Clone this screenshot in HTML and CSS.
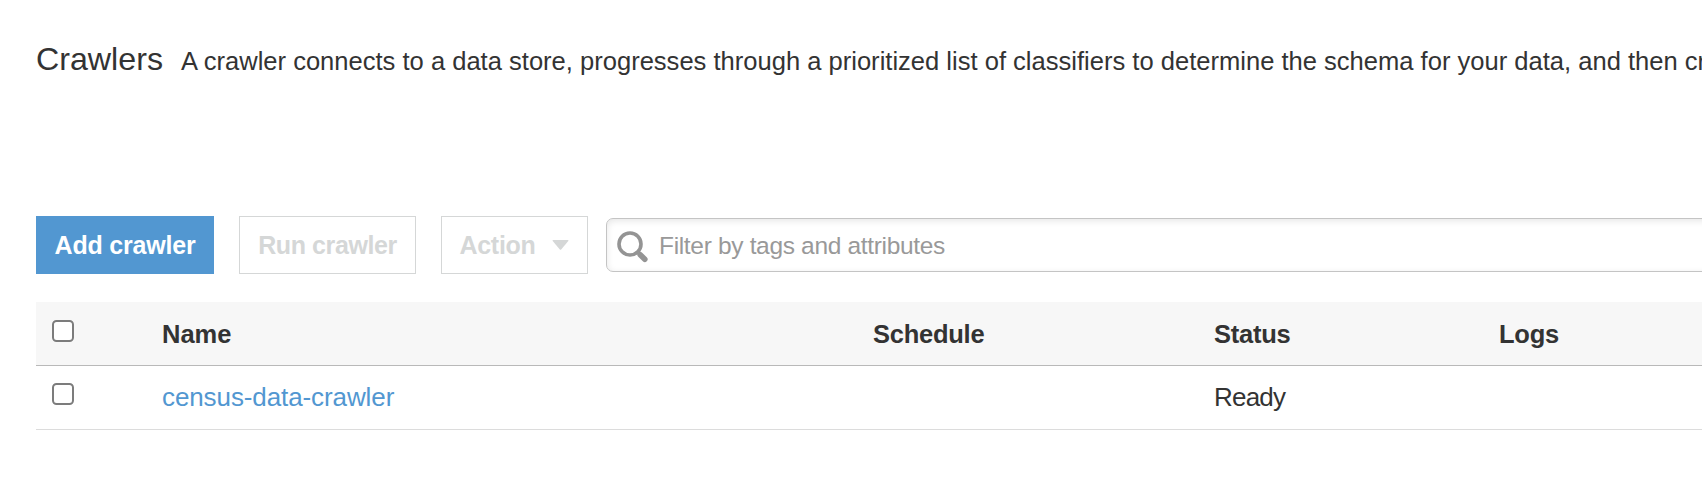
FILE: index.html
```html
<!DOCTYPE html>
<html lang="en">
<head>
<meta charset="utf-8">
<title>Crawlers</title>
<link rel="stylesheet" href="styles.css">
</head>
<body>
<main class="page">
  <header class="intro">
    <h1 class="title">Crawlers</h1>
    <p class="description">A crawler connects to a data store, progresses through a prioritized list of classifiers to determine the schema for your data, and then cr</p>
  </header>
  <div class="toolbar">
    <button class="button primary">Add crawler</button>
    <button class="button run" disabled>Run crawler</button>
    <button class="button action" disabled><span>Action</span><svg class="caret" width="17" height="10" viewBox="0 0 17 10"><path d="M1.2 0h14.6q1.2 0 .5 1L9.4 9.3q-.9 1-1.8 0L.7 1Q0 0 1.2 0z" fill="currentColor"/></svg></button>
    <div class="search">
      <svg class="search-icon" width="31" height="32" viewBox="0 0 31 32" fill="none" stroke="#949494"><circle cx="13" cy="13" r="11" stroke-width="3.6"/><path d="M20.5 20.7l2.2 2.2" stroke-width="4"/><path d="M23.2 23.7l4.6 4.5" stroke-width="5.6" stroke-linecap="round"/></svg>
      <input class="filter" type="text" placeholder="Filter by tags and attributes">
    </div>
  </div>
  <div class="table">
    <div class="row head">
      <input class="check" type="checkbox"><span class="name">Name</span><span class="schedule">Schedule</span><span class="status">Status</span><span class="logs">Logs</span>
    </div>
    <div class="row body">
      <input class="check" type="checkbox"><span class="name"><a class="link">census-data-crawler</a></span><span></span><span class="ready">Ready</span><span></span>
    </div>
  </div>
</main>
</body>
</html>
```
FILE: styles.css
```css
* { box-sizing: border-box; }
body {
  margin: 0;
  background: #fff;
  color: #333;
  font: 26px/32px "Liberation Sans", Arial, sans-serif;
  overflow: hidden;
}
.page { padding: 40px 0 0 36px; }
.intro {
  display: flex;
  align-items: baseline;
  gap: 18px;
  height: 176px;
  white-space: nowrap;
}
.title { margin: 0; font-size: 32.2px; line-height: 38px; font-weight: 400; }
.description { margin: 0; font-size: 25.55px; }
.toolbar { display: flex; align-items: center; height: 58px; }
.button {
  flex: none;
  display: flex;
  align-items: center;
  justify-content: center;
  height: 58px;
  margin: 0 25px 0 0;
  padding: 0;
  border: 1px solid #d5d7d7;
  background: #fff;
  color: #d5d7d7;
  font: bold 25px/32px "Liberation Sans", Arial, sans-serif;
  letter-spacing: -.2px;
}
.primary { width: 178px; border-color: #5297d1; background: #5297d1; color: #fff; }
.run { width: 177px; letter-spacing: -.4px; }
.action { width: 147px; gap: 17px; margin-right: 18px; letter-spacing: -.3px; }
.search {
  flex: 1;
  display: flex;
  align-items: center;
  height: 54px;
  margin-right: -20px;
  padding-left: 10px;
  border: 1px solid #c4c4c4;
  border-radius: 7px;
  box-shadow: inset 0 2px 7px rgba(0, 0, 0, .1);
}
.search-icon { flex: none; margin: 3px 11px 0 0; }
.filter {
  flex: 1;
  padding: 1px 0 0;
  border: 0;
  outline: 0;
  background: transparent;
  font: 24.5px/32px "Liberation Sans", Arial, sans-serif;
  letter-spacing: -.33px;
}
.filter::placeholder { color: #999; opacity: 1; }
.table { margin-top: 28px; }
.row {
  display: grid;
  grid-template-columns: 126px 711px 341px 285px 1fr;
  height: 64px;
  padding-top: 16px;
  border-bottom: 1px solid #dcdcdc;
}
.head { background: #f7f7f7; border-color: #b9b9b9; font-weight: bold; font-size: 25.5px; letter-spacing: -.25px; }
.name { letter-spacing: 0; }
.body { padding-top: 15px; }
.body .name { letter-spacing: -.1px; }
.ready { letter-spacing: -.8px; }
.check {
  appearance: none;
  width: 22px;
  height: 22px;
  margin: 2px 0 0 16px;
  border: 2px solid #7c7c7c;
  border-radius: 4.5px;
  background: #fff;
}
.link { color: #5297d1; }
```
